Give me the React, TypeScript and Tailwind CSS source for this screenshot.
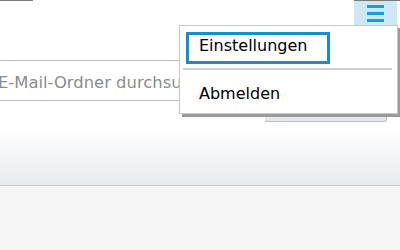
import { useState } from 'react'

export default function App() {
  const [open] = useState(true)

  return (
    <div className="relative w-[400px] h-[250px] overflow-hidden bg-[#f5f5f5] font-['DejaVu_Sans',sans-serif]">
      {/* HEADER */}
      <div className="h-[186px] border-b border-[#c8c8c8] bg-linear-to-b from-white from-70% to-[#e7eaee]">
        <div className="h-[25px] flex justify-between">
          <div className="w-[33px] h-px bg-[#7a7a7a]" />
          <div className="w-[46px] border-t border-[#7a7a7a]">
            <button className="w-[43px] h-[24px] bg-[#cce8f6] flex flex-col items-center pt-[4px] gap-[4px]">
              <span className="block w-[17px] h-[3px] bg-[#1a9be0]" />
              <span className="block w-[17px] h-[3px] bg-[#1a9be0]" />
              <span className="block w-[17px] h-[3px] bg-[#1a9be0]" />
            </button>
          </div>
        </div>

        {/* SEARCH */}
        <div className="mt-[35px] ml-[-2px]">
          <input
            className="w-[200px] h-[41px] border-y border-[#c3c3c3] bg-white pt-[4px] text-[16.4px] outline-none placeholder:text-[#8c8c8c]"
            placeholder="E-Mail-Ordner durchsuchen"
          />
        </div>
        <div className="ml-[265px] w-[122px] h-[21px] bg-[#e5e9ee] border-r border-b border-[#b9bdc2] rounded-br-[3px]" />
      </div>

      {/* DROPDOWN */}
      {open && (
        <div className="absolute left-[179px] top-[25px] w-[219px] h-[89px] bg-white border border-[#c8c8c8] shadow-[3px_3px_0_#9a9a9a] text-[16px] leading-[19px] text-black">
          <div className="ml-[6px] mt-[6px] w-[144px] h-[32px] border-[3px] border-[#1a8dcc] pl-[10px] pt-[1px]">
            Einstellungen
          </div>
          <div className="mt-[4px] ml-[3px] mr-[5px] h-[2px] bg-[#cfcfcf]" />
          <div className="mt-[14px] pl-[19px]">Abmelden</div>
        </div>
      )}
    </div>
  )
}
